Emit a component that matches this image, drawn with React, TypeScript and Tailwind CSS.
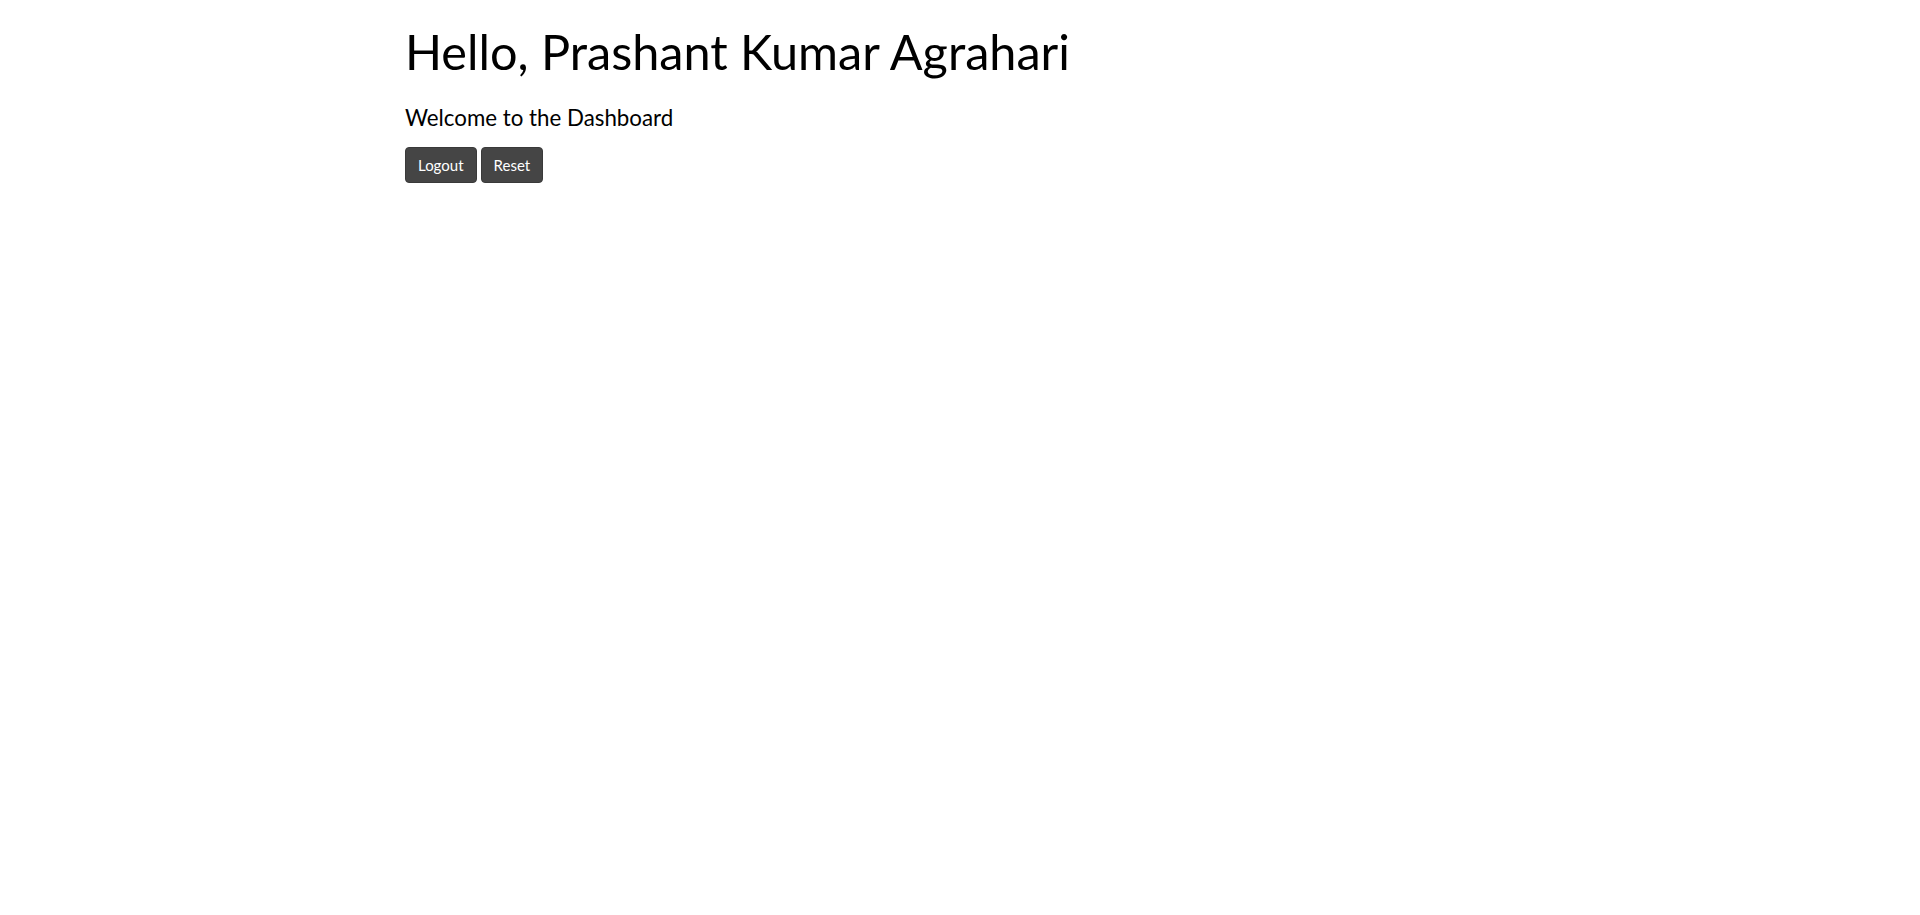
import React from 'react';

const App = () => {
  return (
    <div className="min-h-screen bg-white text-black font-['Lato',sans-serif]">
      <div className="max-w-[1140px] mx-auto px-[15px] pt-[22px]">
        <h1 className="text-[48.6px] leading-[1.2] font-normal">Hello, Prashant Kumar Agrahari</h1>
        <p className="text-[22.3px] leading-[1.5] mt-[21px]">Welcome to the Dashboard</p>
        <div className="flex gap-1 mt-[12px]">
          <button className="bg-[#454545] text-white text-[15px] px-[12px] h-[36px] rounded-[4px] border border-[#3a3a3a]">Logout</button>
          <button className="bg-[#454545] text-white text-[15px] px-[12px] h-[36px] rounded-[4px] border border-[#3a3a3a]">Reset</button>
        </div>
      </div>
    </div>
  );
};

export default App;
